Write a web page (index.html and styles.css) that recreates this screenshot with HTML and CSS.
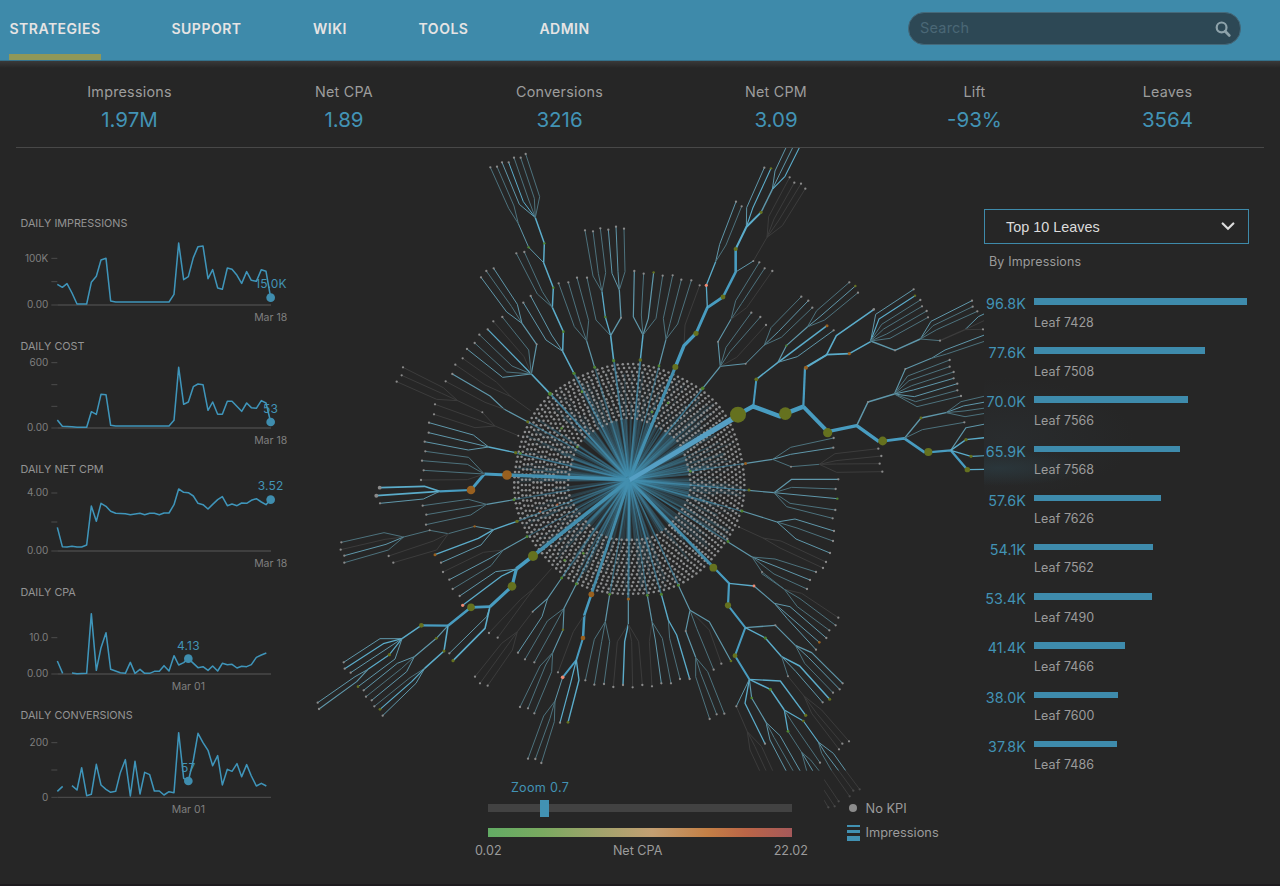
FILE: index.html
```html
<!DOCTYPE html>
<html lang="en">
<head>
<meta charset="utf-8">
<title>Strategies</title>
<link rel="stylesheet" href="styles.css">
</head>
<body>
<header class="topbar">
  <nav class="nav">
    <a class="nav-item active" style="width:92px">STRATEGIES</a>
    <a class="nav-item" style="width:71px">SUPPORT</a>
    <a class="nav-item" style="width:36px">WIKI</a>
    <a class="nav-item" style="width:51px">TOOLS</a>
    <a class="nav-item" style="width:51px">ADMIN</a>
  </nav>
  <div class="search">
    <span>Search</span>
    <svg width="16" height="16" viewBox="0 0 16 16"><circle cx="6.6" cy="6.4" r="4.9" fill="none" stroke="#8ea3ab" stroke-width="2.2"/><path d="M10.2 10.2L14.2 14.4" stroke="#8ea3ab" stroke-width="2.8" stroke-linecap="round"/></svg>
  </div>
</header>
<section class="stats">
  <div class="stat" style="width:85px"><span class="stat-label">Impressions</span><span class="stat-value">1.97M</span></div>
  <div class="stat" style="width:60px"><span class="stat-label">Net CPA</span><span class="stat-value">1.89</span></div>
  <div class="stat" style="width:87px"><span class="stat-label">Conversions</span><span class="stat-value">3216</span></div>
  <div class="stat" style="width:62px"><span class="stat-label">Net CPM</span><span class="stat-value">3.09</span></div>
  <div class="stat" style="width:51px"><span class="stat-label">Lift</span><span class="stat-value">-93%</span></div>
  <div class="stat" style="width:51px"><span class="stat-label">Leaves</span><span class="stat-value">3564</span></div>
</section>
<main class="main">
  <section class="charts">
    <article class="chart">
      <h3>DAILY IMPRESSIONS</h3>
      <svg width="310" height="107" viewBox="0 78 930 321">
        <path class="tick" d="M154 160h18M154 230h18M154 300h18"/><path class="axis" d="M172 300H813"/>
        <text class="ylab" x="145" y="170">100K</text><text class="ylab" x="145" y="310">0.00</text>
        <polyline class="line" points="172,238 187,247 201,236 216,264 231,297 260,297 274,232 289,214 303,165 318,160 332,288 347,291 507,291 522,268 536,114 551,224 565,215 580,158 594,125 609,123 624,221 638,194 653,249 667,253 682,189 696,193 711,211 725,235 740,200 754,226 769,229 784,194 798,199 812,278"/>
        <circle class="mark" cx="812" cy="278" r="13"/><text class="val" x="813" y="249">15.0K</text><text class="xlab" x="812" y="348">Mar 18</text>
      </svg>
    </article>
    <article class="chart">
      <h3>DAILY COST</h3>
      <svg width="310" height="107" viewBox="0 447 930 321">
        <path class="tick" d="M154 473h18M154 539h18M154 604h18M154 669h18"/><path class="axis" d="M172 669H813"/>
        <text class="ylab" x="145" y="483">600</text><text class="ylab" x="145" y="679">0.00</text>
        <polyline class="line" points="172,645 187,664 216,665 231,667 260,667 274,620 289,628 303,568 318,569 332,661 347,663 507,663 522,646 536,487 551,598 565,591 580,545 594,537 609,539 624,616 638,591 653,628 667,628 682,589 696,589 725,619 740,594 754,608 769,610 784,587 798,594 812,651"/>
        <circle class="mark" cx="812" cy="651" r="13"/><text class="val" x="812" y="623">53</text><text class="xlab" x="812" y="717">Mar 18</text>
      </svg>
    </article>
    <article class="chart">
      <h3>DAILY NET CPM</h3>
      <svg width="310" height="107" viewBox="0 816 930 321">
        <path class="tick" d="M154 864h18M154 951h18M154 1038h18"/><path class="axis" d="M172 1038H813"/>
        <text class="ylab" x="145" y="874">4.00</text><text class="ylab" x="145" y="1048">0.00</text>
        <polyline class="line" points="172,967 187,1025 201,1026 216,1024 231,1026 245,1026 260,1020 274,903 289,949 303,895 318,904 332,919 347,925 376,926 391,929 420,925 434,929 449,925 463,925 478,929 492,924 507,924 522,899 536,852 551,862 565,863 580,873 594,895 609,899 624,912 638,898 653,884 667,875 682,902 696,897 711,902 725,894 740,895 754,886 769,881 784,891 798,899 812,883"/>
        <circle class="mark" cx="812" cy="884" r="13"/><text class="val" x="812" y="855">3.52</text><text class="xlab" x="812" y="1086">Mar 18</text>
      </svg>
    </article>
    <article class="chart">
      <h3>DAILY CPA</h3>
      <svg width="310" height="107" viewBox="0 255 930 321">
        <path class="tick" d="M154 368h18M154 477h18"/><path class="axis" d="M172 477H813"/>
        <text class="ylab" x="145" y="378">10.0</text><text class="ylab" x="145" y="487">0.00</text>
        <path class="line" d="M172 438L188 475M216 474L231 476L260 475L274 296L289 466L303 398L318 353L332 463L361 473L376 475L391 442L405 475L420 463L434 475L449 475L463 469L478 469L492 452L507 468L522 422L536 450L551 443L565 431L594 458L609 455L624 466L638 453L653 468L667 445L682 449L696 448L711 459L725 454L740 455L754 449L769 427L784 420L799 414"/>
        <circle class="mark" cx="565" cy="431" r="13"/><text class="val" x="565" y="404">4.13</text><text class="xlab" x="565" y="526">Mar 01</text>
      </svg>
    </article>
    <article class="chart">
      <h3>DAILY CONVERSIONS</h3>
      <svg width="310" height="107" viewBox="0 624 930 321">
        <path class="tick" d="M154 683h18M154 765h18M154 847h18"/><path class="axis" d="M172 847H813"/>
        <text class="ylab" x="145" y="693">200</text><text class="ylab" x="145" y="857">0</text>
        <path class="line" d="M172 829L188 814M216 812L231 825L245 758L260 842L274 838L289 748L303 810L318 823L332 832L347 829L361 773L376 734L391 843L405 739L420 837L434 772L449 779L463 828L478 828L492 840L507 830L522 833L536 653L551 790L565 798L580 735L594 655L609 683L624 706L638 752L653 722L667 810L682 763L696 769L711 746L725 785L740 749L754 783L769 813L784 805L799 813"/>
        <circle class="mark" cx="565" cy="798" r="13"/><text class="val" x="565" y="771">57</text><text class="xlab" x="565" y="895">Mar 01</text>
      </svg>
    </article>
  </section>

  <section class="center">
    <svg id="tree" class="tree" width="674" height="623" viewBox="310 148 674 623"></svg>
    <div class="controls">
      <div class="sliders">
        <div class="zoom-label">Zoom 0.7</div>
        <div class="track"><div class="thumb"></div></div>
        <div class="scale"></div>
        <div class="scale-labels"><span>0.02</span><span>Net CPA</span><span>22.02</span></div>
      </div>
      <div class="legend">
        <div class="legend-row"><i class="dot"></i><span>No KPI</span></div>
        <div class="legend-row"><i class="bars"></i><span>Impressions</span></div>
      </div>
    </div>
  </section>

  <aside class="leaves">
    <div class="select"><span>Top 10 Leaves</span><svg width="14" height="9" viewBox="0 0 14 9"><path d="M1.7 1.5L7 6.8L12.3 1.5" fill="none" stroke="#dcdcdc" stroke-width="2.2" stroke-linecap="round"/></svg></div>
    <div class="by">By Impressions</div>
    <div class="rows">
      <div class="row"><b>96.8K</b><div><i style="width:213px"></i><span>Leaf 7428</span></div></div>
      <div class="row"><b>77.6K</b><div><i style="width:171px"></i><span>Leaf 7508</span></div></div>
      <div class="row"><b>70.0K</b><div><i style="width:154px"></i><span>Leaf 7566</span></div></div>
      <div class="row"><b>65.9K</b><div><i style="width:145.5px"></i><span>Leaf 7568</span></div></div>
      <div class="row"><b>57.6K</b><div><i style="width:127px"></i><span>Leaf 7626</span></div></div>
      <div class="row"><b>54.1K</b><div><i style="width:119px"></i><span>Leaf 7562</span></div></div>
      <div class="row"><b>53.4K</b><div><i style="width:118px"></i><span>Leaf 7490</span></div></div>
      <div class="row"><b>41.4K</b><div><i style="width:91px"></i><span>Leaf 7466</span></div></div>
      <div class="row"><b>38.0K</b><div><i style="width:84px"></i><span>Leaf 7600</span></div></div>
      <div class="row"><b>37.8K</b><div><i style="width:83px"></i><span>Leaf 7486</span></div></div>
    </div>
  </aside>
</main>
<script src="tree.js"></script>
</body>
</html>
```
FILE: styles.css
```css
* { box-sizing: border-box; }
body { margin: 0; width: 1280px; height: 886px; overflow: hidden; background: #262626; color: #9b9b9b; font-family: Inter, "Open Sans", sans-serif; font-size: 13px; border-bottom: 2px solid #1d1b1e; }

.topbar { display: flex; justify-content: space-between; height: 61px; padding: 0 39px 0 9px; background: #3e8aaa; border-bottom: 1px solid #35718b; }
.nav { display: flex; gap: 70px; }
.nav-item { height: 60px; line-height: 58px; color: #e6e4e4; font-size: 14px; font-weight: 600; letter-spacing: .5px; white-space: nowrap; display: flex; justify-content: center; }
.nav-item.active { border-bottom: 6px solid #8f9859; }
.search { width: 333px; height: 33px; margin-top: 12px; padding: 0 9px 0 11px; border: 1px solid #45697a; border-radius: 16px; background: #2d4855; display: flex; align-items: center; justify-content: space-between; color: #4a6775; font-size: 14.5px; letter-spacing: .2px; }
.search span { padding-bottom: 2px; }

.stats { display: flex; gap: 142px; height: 87px; margin: 0 16px; padding: 21px 0 0 71px; border-bottom: 1px solid #484848; }
.stats::before { content: ""; position: absolute; left: 0; top: 61px; width: 1280px; height: 7px; background: linear-gradient(#393939, #262626); }
.stat { display: flex; flex-direction: column; align-items: center; white-space: nowrap; }
.stat-label { font-size: 14.3px; line-height: 19px; letter-spacing: .25px; color: #9d9d9d; }
.stat-value { font-size: 20.5px; line-height: 24px; margin-top: 7px; color: #4293b5; }

.main { display: grid; grid-template-columns: 310px 674px 296px; height: 738px; }

.charts { padding-top: 67px; }
.chart { height: 123px; }
.chart h3 { margin: 0; padding: 1px 0 0 20.5px; font-size: 10.8px; font-weight: 400; line-height: 15px; letter-spacing: 0; color: #949494; }
.chart svg { display: block; }
.tick { stroke: #4b4b4b; stroke-width: 3; fill: none; }
.axis { stroke: #484848; stroke-width: 4; }
.line { fill: none; stroke: #3f95ba; stroke-width: 4.6; stroke-linejoin: round; }
.mark { fill: #3f8dae; }
.ylab { font-size: 30px; text-anchor: end; fill: #7f7f7f; }
.xlab { font-size: 31.5px; text-anchor: middle; fill: #7f7f7f; }
.val { font-size: 36px; text-anchor: middle; fill: #4293b5; letter-spacing: .6px; }

.tree { display: block; overflow: visible; }
.spoke { stroke: #438faf; fill: none; }
.controls { display: flex; gap: 38px; padding: 8px 0 0 165px; }
.sliders { width: 334px; padding: 0 17px 0 13px; font-size: 12.6px; }
.zoom-label { width: 104px; text-align: center; line-height: 18px; color: #4293b5; letter-spacing: .3px; }
.track { height: 8px; margin-top: 7px; background: #424242; }
.thumb { width: 9px; height: 17px; margin-left: 52px; transform: translateY(-4px); background: #4292b3; }
.scale { height: 9px; margin-top: 16px; background: linear-gradient(90deg, #62ab64, #7aaa60 18%, #a2a36c 37%, #c39f72 54%, #c48046 72%, #bb6547 85%, #a5595a); }
.scale-labels { display: flex; justify-content: space-between; margin: 5px -16px 0 -13px; line-height: 17px; }
.legend { padding-top: 17px; font-size: 12.8px; }
.legend-row { display: flex; align-items: center; gap: 5.5px; height: 24.5px; }
.dot { width: 8px; height: 8px; margin: 0 3px 0 2px; border-radius: 50%; background: #8c8c8c; }
.bars { width: 13px; height: 16px; background: linear-gradient(#4191b2 0 2px, transparent 2px 5px, #4191b2 5px 8px, transparent 8px 11px, #4191b2 11px); }

.leaves { padding-top: 61px; background: radial-gradient(ellipse 90px 18px at 15px 320px, #2a363b 0, transparent 100%), radial-gradient(ellipse 130px 60px at 20px 290px, #292c2e 0, transparent 100%), #262626; }
.select { display: flex; align-items: center; justify-content: space-between; width: 265px; height: 35px; padding: 0 13px 0 21px; border: 1px solid #3e8aaa; color: #dcdcdc; font: 14.4px "Liberation Sans", sans-serif; }
.by { margin: 9px 0 0 5px; line-height: 17px; font-size: 12.5px; letter-spacing: .15px; }
.rows { margin-top: 24px; }
.row { display: flex; height: 49.2px; }
.row b { width: 42px; margin-right: 8px; text-align: right; font-weight: 400; font-size: 14.3px; line-height: 19px; letter-spacing: .1px; color: #4293b5; }
.row i { display: block; height: 6.5px; margin-top: 4px; background: #3e8bac; }
.row span { display: block; margin-top: 9px; font-size: 12.5px; line-height: 17px; letter-spacing: .05px; }
```
FILE: tree.js
```js
// Radial decision tree. Each cluster lists branches as "tone+width x,y x,y ... end".
// Tones: b bright, m medium, d dim, f faint. A trailing "o" puts a leaf dot on the last point.
const TONE = { b: '#5bacca', t: '#489cc0', m: '#5f97aa', d: '#4d727d', f: '#3c3c3c' };
const NODE = { g: '#65711f', l: '#4f8431', o: '#99601f', r: '#ef8a73', w: '#8a8a8a' };
const NS = 'http://www.w3.org/2000/svg';
const svg = document.getElementById('tree');
const el = (name, attrs, parent) => {
  const e = document.createElementNS(NS, name);
  for (const k in attrs) e.setAttribute(k, attrs[k]);
  parent.appendChild(e);
  return e;
};
const defs = el('defs', {}, svg);
const clip = el('clipPath', { id: 'frame' }, defs);
el('path', { d: 'M310 148H984V830H824V771H310Z' }, clip);
const root = el('g', { 'clip-path': 'url(#frame)' }, svg);

// Hub: spokes out to the ring of nodes
const CX = 629.3, CY = 479.8;
let seed = 7;
const rnd = () => (seed = (seed * 16807) % 2147483647) / 2147483647;
const hub = el('g', {}, root);
const ray = (a, r0, r1, w, o) => el('line', {
  x1: CX + Math.cos(a) * r0, y1: CY + Math.sin(a) * r0, x2: CX + Math.cos(a) * r1, y2: CY + Math.sin(a) * r1,
  class: 'spoke', 'stroke-width': w, 'stroke-opacity': o
}, hub);
for (let i = 0; i < 300; i++) {
  const a = rnd() * Math.PI * 2;
  ray(a, 4, 61, 1 + rnd() * 2, 0.12 + rnd() * 0.16);
  if (i % 3) ray(a, 61, 70 + rnd() * 46, 0.8 + rnd() * 1.8, 0.1 + rnd() * 0.14);
}
for (let r = 61, k = 0; r < 118.5; r += 3.85, k++) {
  const n = Math.round(2 * Math.PI * r / 5.2);
  for (let i = 0; i < n; i++) {
    const a = (i + (k % 2) / 2) / n * Math.PI * 2;
    const rr = r + Math.sin(a * 7) * 0.9;
    el('circle', { cx: CX + Math.cos(a) * rr, cy: CY + Math.sin(a) * rr, r: 1.3, fill: '#8c8d8e' }, hub);
  }
}
// main spokes: x, y, width, opacity
[[402,62,1.8,.75],[344,82,1.3,.5],[282,100,1.8,.7],[210,161,1.8,.8],[143,245,1.5,.6],[107,339,1.5,.7],[81,405,3.4,1],[102,479,1.2,.5],[111,544,1.4,.6],[141,590,1.2,.5],[159,648,3.6,1],[245,714,1.4,.6],[289,731,1.6,.65],[334,763,2.8,.95],[389,765,1.4,.6],[445,777,2,.7],[502,767,1.4,.6],[544,764,1.6,.65],[596,737,1.5,.65],[700,682,3,.95],[745,605,1.3,.6],[787,514,1.3,.6],[806,451,1.4,.65],[797,370,1.4,.6],[669,145,1.6,.7],[586,81,3.2,1],[537,78,1.4,.6],[481,60,1.8,.75]]
  .forEach(([x, y, w, o]) => el('line', { x1: CX, y1: CY, x2: 480 + x / 3, y2: 340 + y / 3, class: 'spoke', 'stroke-width': w, 'stroke-opacity': o }, hub));
el('path', { d: 'M629 478L736.5 413L739.5 418L630.5 482Z', fill: '#559fc4' }, hub);

const clusters = [
  { x: 380, y: 145, s: 3, lines: `
b1.5 582,685 548,619 550,560 517,487 520,428 491,353 493,295 466,218
m1 491,353 446,307 415,236
d1 415,236 386,190 331,67 o
d1 415,236 402,183 351,65 o
m1 466,218 418,178 366,52 o
b1 466,218 430,170 386,52 o
d1 466,218 445,162 402,38 o
d1 466,218 463,160 422,38 o
d1 466,218 479,155 437,27 o
d1 517,487 472,447 409,325 o
d1 517,487 487,440 433,321 o
m1 548,619 498,585 430,473 o
m1 548,619 515,570 452,453 o
b1.6 510,746 454,687
m1.2 454,687 470,598 426,535
m1 426,535 380,501 303,397 o
d1 426,535 395,485 319,378 o
m1 426,535 412,478 341,370 o
m1 454,687 368,697 261,612 o
d1 454,687 380,681 284,594 o
d1 454,687 396,663 298,569 o
b1.2 454,687 323,553 o
f1 454,687 432,635 340,529 o
d1 454,687 446,615 367,516 o
m1.2 644,667 620,588
d1 620,588 583,545 536,415 o
d1 620,588 600,530 565,412 o
d1 620,588 626,527 591,398 o
b1.6 701,647 692,572
d1 692,572 648,525 621,398 o
b1.3 692,572 676,516 666,440
d1 666,440 639,393 615,256 o
d1 666,440 655,385 639,259 o
d1 666,440 677,383 661,250 o
m1.3 692,572 723,518 718,435
m1 718,435 696,385 685,254 o
m1 718,435 714,380 708,245 o
d1 718,435 735,380 732,251 o`,
    nodes: 'l1.6 582,685 l1.3 550,560 l1.2 520,428 l1.2 493,295 l1.2 446,307 l2 510,746 l1.5 644,667 l1.6 701,647 l1.2 676,516 w1 723,518 w1 470,598' },
  { x: 620, y: 145, s: 3, lines: `
b1.5 61,645 69,570
m1.2 69,570 40,515 43,378 o
d1 69,570 64,510 71,386 o
m1.2 69,570 85,520 101,382
d1 69,570 108,520 128,392 o
m1.2 117,663 138,583
d1 138,583 130,520 158,391 o
d1 138,583 150,535 184,404 o
d1 138,583 173,537 214,406 o
f1 192,602 195,540 239,421 o
t3.4 166,666 192,602 228,565
t2.8 228,565 262,488 309,456
t2.6 309,456 347,381 347,312
b2 347,312 379,246 423,202
m1.4 423,202 457,133
b1.3 262,488 259,421 287,350
m1 287,350 299,298 348,170 o
d1 287,350 318,300 365,184 o
m1 347,381 400,348
f1 400,348 441,277 446,215 509,97 o
f1 441,277 462,222 523,113 o
f1 441,277 475,228 543,116 o
f1 441,277 487,242 556,131 o
m1 379,246 380,188 433,68 o
b1.1 379,246 398,190 453,70
m1 457,133 465,78 498,8
m1 457,133 480,85 518,8
b1.1 457,133 495,94 538,8
m1.3 248,730 301,664
m1.1 301,664 294,590 333,523
d1 333,523 347,467 418,352 o
d1 333,523 365,475 434,370 o
f1 333,523 380,488 457,378 o
d1 301,664 318,607 394,503 o
d1 301,664 330,620 421,516 o
f1 301,664 350,637 438,540 o
m1 301,664 377,656 433,600
d1 433,600 453,548 544,455 o
m1 433,600 475,560 565,467 o
d1 433,600 484,577 577,488 o
t2 400,783 409,703
b1.5 409,703 474,652
m1.2 474,652 499,602 562,546
d1 562,546 590,497 688,412 o
m1 562,546 600,515 706,423
d1 562,546 614,525 714,443 o
b1.5 474,652 621,542
m1 474,652 532,635 641,556 o
b1.6 555,667 620,629 649,572 762,493 o
b1.6 620,629 688,626 752,590`,
    nodes: 'g1.8 61,645 l1.4 117,663 g3 166,666 g2.6 228,565 g2.4 309,456 g2.1 347,312 g1.6 423,202 r1.6 259,421 g1.2 453,70 g1.2 101,382 l1.8 248,730 l1.1 499,602 g1.9 409,703 o1.5 621,542 g1.2 706,423 w1 400,348 w1 294,590 w1 377,656' },
  { x: 760, y: 260, s: 3, lines: `
t4.4 -66,464 -21,439 60,469 76,461 130,440
t3.8 130,440 203,515
t3.4 203,515 290,497 357,545
t2.8 357,545 433,535 495,578
t2.4 495,578 572,571 622,629
b1.4 622,629 676,628
t2.2 130,440 135,323
b1.6 138,323 200,285
m1.4 332,243 405,271 481,237
d1 481,237 540,242
f1.2 540,242 615,209
m1 615,209 655,170 676,160
f1 615,209 676,180
f1 615,209 669,208 o
m1 481,237 513,184 636,122 o
d1 481,237 519,197 638,140 o
d1 481,237 530,209 652,154 o
m1 332,243 347,163 461,88 o
b1.1 332,243 357,177 465,107
d1 332,243 365,193 481,120 o
d1 332,243 371,207 486,139 o
d1 332,243 380,222 500,153 o
d1 332,243 390,235 504,172 o
m1.5 290,497 324,426 403,402
m1.1 403,402 436,327 514,295
m1 514,295 555,270 676,224
d1 514,295 560,282 676,243
d1 403,402 443,348 569,300 o
d1 403,402 447,362 569,320 o
d1 403,402 455,377 581,336 o
m1 403,402 460,390 581,355 o
m1 403,402 463,410 592,371 o
d1 403,402 467,425 592,391 o
d1 403,402 471,440 603,408 o
m1.4 433,535 483,474 558,458
d1 558,458 603,425 676,408
m1 558,458 610,438 676,426
d1 558,458 612,453 676,444
d1 558,458 615,470 676,460
d1 433,535 487,509 613,487 o
m1.1 572,571 618,503 676,492
b1.4 572,571 618,539 676,533
b1.2 572,571 633,589 676,587
m1.2 -42,610 38,598
d1 38,598 92,562 221,534 o
m1 38,598 92,583 220,563 o
d1 38,598 93,620 178,613
f1 178,613 225,581 355,566 o
f1 178,613 228,602 364,588 o
f1 178,613 230,612 359,611 o
f1 178,613 230,637 367,635 o
m1.2 -34,691 42,698
m1.2 42,698 95,658 235,658 o
d1 42,698 95,682 227,687 o
m1 42,698 232,716
d1 42,698 90,730 226,750 o
d1 42,698 80,740 218,775 o`,
    nodes: 'g8 -66,464 g6.3 76,461 g4.6 203,518 g4.4 368,543 g4 505,576 g2.7 622,629 o2 138,323 o1.6 268,281 w1.2 341,148 w1.1 405,271 w1.1 540,242 g1.2 465,107 w1 324,426 w1 436,327 g1.4 483,474 g1.7 618,539 g1.6 633,589 w1 93,620 l1.2 232,716' },
  { x: 0, y: 0, s: 1, lines: `
m1.1 742,511 777,522
m1 777,522 795,519 834,531 o
d1 777,522 797,528 833,541 o
m1 777,522 796,539 830,553 o
f1 739,527 763,538 781,541 826,562 o
f1 763,538 780,548 823,568 o
m1.2 728,542 752,557
d1 752,557 775,559 816,572 o
m1 752,557 775,566 810,580 o
d1 752,557 774,574 807,589 o
d1 752,557 762,572 784,589`,
    nodes: 'l1.5 742,511 l1.4 728,541.5 w1 762,572 o1.5 745.5,463.5 g1.5 749,490 w1 739,527' },
  { x: 310, y: 360, s: 3, lines: `
f1 663,153 603,110 560,67 458,-5 o
f1 603,110 525,75 436,14 o
m1.2 653,185 583,148 540,108 427,42 o
f1 583,148 525,127 407,64 o
f1 555,198 517,157 443,122 400,83 279,22 o
f1 443,122 395,100 275,46 o
f1 443,122 380,118 260,65 o
f1 625,227 555,198 500,178 375,133 o
f1 555,198 495,203 372,163 o
b1.3 617,278 536,261
m1 536,261 490,225 357,188 o
m1 536,261 356,218 o
m1 536,261 475,270 344,245 o
t3 591,345 523,342
t2.8 523,342 483,390
t2.2 483,390 389,394
d1 523,342 476,292 346,274 o
d1 523,342 472,313 336,302 o
d1 523,342 341,331 o
f1 523,342 472,359 333,360 o
b1.6 389,394 343,379 209,383
b1.6 389,394 199,407
m1 389,394 340,417 210,430 o
m1.1 612,419 530,433
d1 530,433 475,418 338,437 o
d1 530,433 349,464 o
d1 530,433 482,465 348,494 o
b1.4 621,484 551,509
b1.3 551,509 505,535 375,584
m1 551,509 513,555 393,608 o
m1 551,509 494,499
d1 494,499 415,521 359,511 281,531
d1 281,531 222,518 94,547 o
f1 281,531 225,538 92,569 o
m1 281,531 228,553 103,587 o
d1 281,531 235,570 103,608 o
f1 415,521 370,543 236,588 o
f1 415,521 380,570 250,608 o
m1.1 651,530 580,570
f1 580,570 520,577 399,636 o
m1 580,570 540,595 418,659 o
d1 580,570 543,617 428,687 o
t3.6 669,588 619,627
t3.2 619,627 606,679 540,740
t2.6 540,740 483,742 414,797
t2.1 414,797 334,796
b1.4 334,796 276,836
m1 619,627 557,635 449,708 o
b1.3 619,627 575,648 458,736
m1 540,740 530,770 418,880 o
b1.6 540,740 525,805 429,902
m1.2 414,797 379,835 313,890
b1.6 414,797 402,873 344,925
m1 276,836 210,836 101,907 o
b1.2 276,836 220,851 104,926 o
m1 276,836 122,938 o
b1.2 276,836 238,884 174,928
m1 276,836 255,897 144,980
m1 174,928 135,950 23,1028 o
m1.1 174,928 140,965 27,1047 o
m1 313,890 262,910 161,991 o
d1 313,890 275,925 168,1010 o
m1 313,890 290,935 185,1021 o
d1 344,925 300,953 193,1039 o
b1.2 344,925 305,965 210,1048
m1 344,925 318,970 218,1067 o
f1 725,625 672,685 632,718 537,819 o
f1 672,685 563,833 o
f1 622,815 575,850 495,950 o
f1 622,815 510,970 o
f1 622,815 607,870 533,977 o`,
    nodes: 'g1.5 653,185 g1.6 617,278 o4.8 591,345 o4.3 483,390 w1.9 209,383 w2 199,407 l1.4 612,419 g1.7 621,484 o1.5 375,584 o1.2 494,499 w1 359,511 l1.4 651,530 g5 669,588 g4.3 606,679 g3.8 483,742 g2.3 334,796 g1.4 379,835 g1.5 402,873 r1.6 458,736 g1.6 429,902 g1.6 238,884 g1.3 144,980 g1.4 210,1048 w1 517,157 w1 625,227' },
  { x: 500, y: 570, s: 3, lines: `
m1.1 185,24 143,85 98,125
m1 143,85 126,140 54,248 o
f1 98,125 52,185
m1.2 229,42 192,115
d1 192,115 142,153 75,268 o
d1 192,115 165,165 103,277 o
m1.1 192,115 189,179 158,248
d1 158,248 120,288 60,411 o
d1 158,248 137,285 84,415 o
d1 158,248 155,305 103,430 o
t2.5 274,73 253,135 249,204
t2 249,204 229,270 188,322
f1 253,135 220,185 174,307 o
m1 188,322 165,393
d1 165,393 131,438 84,566 o
d1 165,393 150,445 106,567 o
d1 165,393 163,455 124,579 o
b1.2 229,270 213,335 180,458 o
b1.4 229,270 237,330 204,457
m1.2 329,73 316,155
d1 316,155 283,208 256,331 o
d1 316,155 305,215 283,344 o
d1 316,155 329,215 312,342 o
m1.2 385,87 385,163
f1 385,163 352,215 340,351 o
b1.4 385,163 374,215 369,345 o
f1 385,163 395,215 398,352 o
f1 385,163 416,215 427,345 o
m1.2 442,76 456,155
f1 456,155 448,215 456,349 o
m1 456,155 466,210 484,340 o
d1 456,155 487,205 513,340 o
b1.4 484,73 505,150
d1 505,150 509,205 540,327 o
b1.3 505,150 530,195 569,327 o
m1.2 535,46 570,121 557,183 587,262
d1 587,262 587,320 629,447 o
d1 587,262 602,310 650,433 o
d1 587,262 623,305 673,431 o
d1 570,121 590,175 641,299 o
f1 570,121 628,180 664,281 o
m1.2 570,121 628,155 693,273
t2.2 640,-9 687,40 684,106
b1.3 687,40 762,48
m1.2 762,48 823,100
d1 784,10 853,58
f1 853,58 905,70 1015,143 o
d1 853,58 900,86 1007,166 o
d1 853,58 892,110 988,181 o
m1 823,100 870,110 979,204 o
m1 823,100 958,217
m1 823,100 862,146 948,239 o
t2 684,106 736,173 705,257 748,328
m1.4 736,173 826,166
m1.1 826,166 886,226
b1.4 736,173 796,204 845,260
m1.2 886,226 935,248 1028,340 o
m1 886,226 925,262 1019,358 o
d1 886,226 914,280 999,368 o
b1.5 845,260 899,288 989,388
m1 845,260 888,305 968,397 o
d1 845,260 864,319
f1 864,319 912,378 965,420 1047,514 o
f1 912,378 950,430 1027,521 o
f1 912,378 935,430 1017,538 o
b1.4 748,328 841,333 917,436
b1.5 748,328 811,358 853,420
m1.2 748,328 755,384 798,457
b1.3 748,328 735,400 795,521 o
m1 748,328 709,409
f1 709,409 742,485 750,540 779,602
f1 742,485 765,530 798,602
f1 742,485 785,530 818,602
m1 798,457 810,510 858,602
d1 798,457 822,502 879,602
m1 798,457 840,497 900,602
b1.3 853,420 864,484
d1 864,484 905,547 920,602
m1 905,547 938,602
d1 905,547 932,570 957,602
d1 853,420 880,462 960,578 o
b1.2 853,420 910,453 955,516
d1 955,516 965,550 995,602
m1 955,516 975,548 1016,602
m1 955,516 1000,550 1037,602
f1 995,602 1049,679 o
f1 1016,602 1060,662 o
f1 1037,602 1079,658 o
f1 972,628 1016,694 o
f1 972,660 1004,709 o
f1 972,690 985,712 o`,
    nodes: 'l1.4 185,24 l1.4 229,42 g1.2 189,179 o2.9 274,73 o2.3 249,204 r1.8 188,322 g1.4 204,457 l1.4 329,73 o1.6 385,87 l1.4 442,76 l1.5 484,73 l1.4 535,46 g1.3 693,273 g3.9 640,-7 g3.1 684,106 g2.4 705,257 r1.4 762,48 w1.1 826,166 l1.6 796,204 o1.3 958,217 g1.5 989,388 w1 864,319 g1.6 917,436 l1.6 811,358 l1.3 755,384 w1.1 709,409 l1.4 864,484 g1.3 910,453 w1 98,125 w1 557,183' }
];

clusters.forEach(c => {
  const place = p => { const [x, y] = p.split(',').map(Number); return [c.x + x / c.s, c.y + y / c.s]; };
  const leaves = [];
  c.lines.trim().split('\n').forEach(row => {
    const t = row.trim().split(' ');
    const head = t.shift();
    const leaf = t[t.length - 1] === 'o' && t.pop();
    const pts = t.map(place);
    el('polyline', { points: pts.join(' '), fill: 'none', stroke: TONE[head[0]], 'stroke-width': head.slice(1), 'stroke-linejoin': 'round' }, root);
    if (leaf) leaves.push(pts[pts.length - 1]);
  });
  leaves.forEach(p => el('circle', { cx: p[0], cy: p[1], r: 1.15, fill: p[1] > 780 ? '#4a4a4a' : '#8a8a8a' }, root));
  const n = c.nodes.split(' ');
  for (let i = 0; i < n.length; i += 2) {
    const p = place(n[i + 1]);
    el('circle', { cx: p[0], cy: p[1], r: n[i].slice(1), fill: NODE[n[i][0]] }, root);
  }
});
// coloured nodes inside the ring
[[306,155],[245,265],[292,321],[121,340],[564,189],[516,216],[310,640],[254,661],[631,394]].forEach(([x, y]) =>
  el('circle', { cx: 480 + x / 3, cy: 340 + y / 3, r: 1.3, fill: '#5a8f3e' }, root));
[[181,515],[232,494]].forEach(([x, y]) => el('circle', { cx: 480 + x / 3, cy: 340 + y / 3, r: 1.1, fill: '#b0603f' }, root));
```
